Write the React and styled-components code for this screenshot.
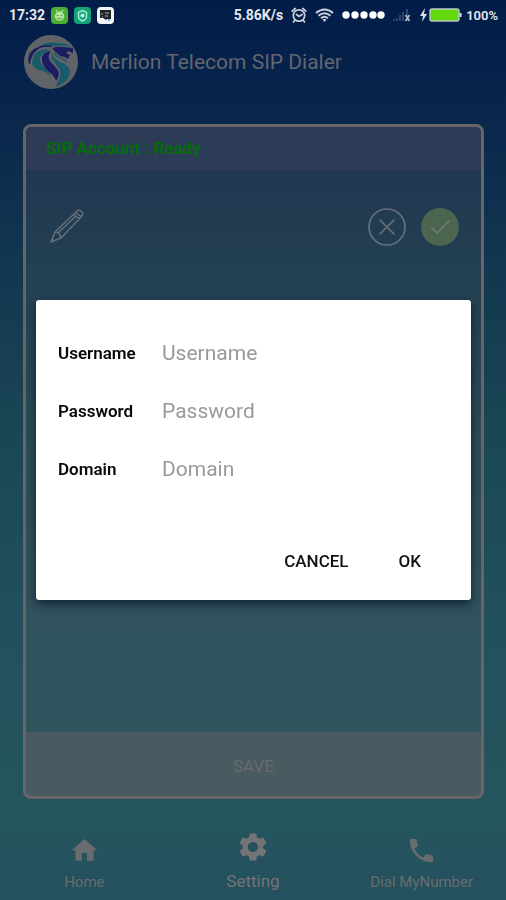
import React from "react";
import styled, { createGlobalStyle } from "styled-components";
import { MdHome, MdSettings, MdPhone } from "react-icons/md";

const GlobalStyle = createGlobalStyle`
  * { box-sizing: border-box; }
  body { margin: 0; background: #24515f; font-family: Roboto, "Liberation Sans", sans-serif; }
  button, input { font: inherit; }
`;

const Screen = styled.div`
  display: flex;
  flex-direction: column;
  min-height: 100vh;
  background: linear-gradient(#011c48 0%, #0a264c 13%, #123850 30%, #1b4855 50%, #23505e 70%, #24555d 90%, #25505f 100%);
`;

const StatusBar = styled.header`
  display: flex;
  align-items: center;
  justify-content: space-between;
  height: 30px;
  padding: 0 8px 0 9px;
  color: #e4e8ef;
  font-size: 14px;
  font-weight: 700;
`;

const StatusGroup = styled.div`
  display: flex;
  align-items: center;
  gap: ${(p) => p.$gap}px;
`;

const Battery = styled.div`
  display: flex;
  align-items: center;
  gap: 4px;
  font-size: 13px;
  font-weight: 600;
`;

const TitleBar = styled.div`
  display: flex;
  align-items: center;
  gap: 13px;
  height: 64px;
  padding: 0 24px;
`;

const Title = styled.h1`
  margin: 0;
  color: #62666f;
  font-size: 21px;
  font-weight: 400;
`;

const Card = styled.main`
  display: flex;
  flex: 1;
  flex-direction: column;
  margin: 30px 22px 0 23px;
  overflow: hidden;
  border: 3px solid #666669;
  border-radius: 8px;
  background: rgba(87, 87, 94, 0.26);
`;

const AccountStatus = styled.div`
  height: 43px;
  padding: 0 20px;
  background: rgba(80, 75, 100, 0.3);
  color: #046c0c;
  font-size: 17px;
  font-weight: 700;
  line-height: 43px;
`;

const Actions = styled.div`
  display: flex;
  flex: 1;
  align-items: flex-start;
  gap: 14px;
  padding: 38px 21px 0 24px;
`;

const IconButton = styled.button`
  display: flex;
  padding: 0;
  border: 0;
  background: none;
  &:first-child { margin-right: auto; }
`;

const SaveButton = styled.button`
  height: 64px;
  padding: 4px 0 0;
  border: 0;
  background: rgba(112, 102, 105, 0.38);
  color: #686a6e;
  font-size: 17px;
`;

const Nav = styled.nav`
  display: grid;
  grid-template-columns: repeat(3, 1fr);
  height: 101px;
  padding-top: 31px;
`;

const NavLink = styled.a`
  display: flex;
  flex-direction: column;
  align-items: center;
  gap: ${(p) => (p.$active ? 7 : 6)}px;
  padding-top: ${(p) => (p.$active ? 0 : 5)}px;
  color: ${(p) => (p.$active ? "#747476" : "#696c6e")};
  font-size: ${(p) => (p.$active ? 17 : 15)}px;
  line-height: 20px;
  text-decoration: none;
`;

const Overlay = styled.div`
  position: fixed;
  inset: 0;
  display: flex;
  align-items: center;
  justify-content: center;
  padding: 0 35px 0 36px;
`;

const Dialog = styled.form`
  width: 100%;
  padding: 24px 22px 19px;
  border-radius: 3px;
  background: #fff;
  box-shadow: 0 4px 10px rgba(0, 15, 30, 0.65);
`;

const Field = styled.label`
  display: grid;
  grid-template-columns: 104px 1fr;
  align-items: center;
  height: 58px;
  color: #080808;
  font-size: 17px;
  font-weight: 600;
`;

const TextBox = styled.input`
  width: 100%;
  padding: 0;
  border: 0;
  outline: 0;
  background: none;
  color: #222;
  font-size: 21px;
  font-weight: 400;
  &::placeholder { color: #999; opacity: 1; }
`;

const DialogActions = styled.div`
  display: flex;
  justify-content: flex-end;
  gap: 18px;
  margin-top: 43px;
  padding-right: 12px;
`;

const DialogButton = styled.button`
  height: 40px;
  padding: 0 16px;
  border: 0;
  background: none;
  color: #111;
  font-size: 17px;
  font-weight: 500;
`;

const AndroidBadge = () => (
  <svg width="17" height="17" viewBox="0 0 17 17" aria-hidden="true">
    <rect width="17" height="17" rx="4" fill="#4caf32" />
    <path d="M5 3l2 3M12 3l-2 3" stroke="#b9e4a5" strokeWidth="1.200" />
    <circle cx="8.500" cy="9.200" r="4.600" fill="#b9e4a5" />
    <path d="M5.500 8.500h2M9.500 8.500h2M6 11q2.500 2 5 0" stroke="#4caf32" fill="none" strokeWidth="1.200" />
  </svg>
);

const ShieldBadge = () => (
  <svg width="17" height="17" viewBox="0 0 17 17" aria-hidden="true">
    <rect width="17" height="17" rx="4" fill="#10a477" />
    <path d="M8.500 3.500l4 2v4q0 3-4 4.500-4-1.500-4-4.500v-4z" fill="none" stroke="#a7e6cf" strokeWidth="1.500" />
    <circle cx="8.500" cy="8.500" r="2" fill="#c9f3e4" />
  </svg>
);

const ChatBadge = () => (
  <svg width="17" height="17" viewBox="0 0 17 17" aria-hidden="true">
    <rect width="17" height="17" rx="4" fill="#f3f5f6" />
    <path d="M3 3h11v9h-4l-1 1-3-2H3z" fill="#1f2427" />
    <path d="M4 7h2M8 6h4M8 9h3M5 10h1" stroke="#aab0b3" />
    <circle cx="12" cy="13" r="1" fill="#3696e8" />
  </svg>
);

const AlarmIcon = () => (
  <svg width="16" height="16" viewBox="0 0 16 16" fill="none" stroke="#c9d0dc" strokeWidth="1.700" strokeLinecap="round" aria-hidden="true">
    <circle cx="8" cy="8.500" r="5.700" />
    <path d="M1.200 4.200l3-2.700M14.800 4.200l-3-2.700M5.500 7.500L8 9.500l3-2M4 13l-1.500 2M12 13l1.500 2" />
  </svg>
);

const WifiIcon = () => (
  <svg width="19" height="14" viewBox="0 0 19 14" fill="none" stroke="#c9d0dc" strokeWidth="2" aria-hidden="true">
    <path d="M1 5q8.500-7 17 0M3.500 7.700q6-5 12 0M6 10.300q3.500-3 7 0" />
    <path d="M7.500 11.500q2-1.500 4 0l-2 2.500z" fill="#c9d0dc" stroke="none" />
  </svg>
);

const SimDots = () => (
  <svg width="43" height="8" viewBox="0 0 43 8" fill="#fff" aria-hidden="true">
    {[4, 13, 22, 31, 39].map((x) => <circle key={x} cx={x} cy="4" r="3.700" />)}
  </svg>
);

const SignalIcon = () => (
  <svg width="18" height="14" viewBox="0 0 18 14" aria-hidden="true">
    <path d="M1 13v-2M4 13v-3M7 13V7M10 13V4M14 13V1" stroke="#304668" strokeWidth="2" />
    <path d="M12.500 7l4 6M16.500 7l-4 6" stroke="#aeb8c8" strokeWidth="1.700" />
  </svg>
);

const ChargeIcon = () => (
  <svg width="43" height="16" viewBox="0 0 43 16" aria-hidden="true">
    <path d="M6 1L1 9h3l-1 6 5-8H5z" fill="#d9dfe7" />
    <rect x="11" y="2" width="29" height="12" rx="2" fill="#62d90b" stroke="#b9c9c9" strokeWidth="1.400" />
    <path d="M41.500 6v4" stroke="#d5dde5" strokeWidth="2" />
  </svg>
);

const Logo = () => (
  <svg width="54" height="54" viewBox="0 0 54 54" role="img" aria-label="Merlion">
    <circle cx="27" cy="27" r="27" fill="#616466" />
    <path d="M17 10Q26 6 34 8q9 0 13 4-7-2-15-1-9 0-17 1z" fill="#175b6a" />
    <path d="M5 29Q2 18 12 13q8-4 17-2l-2 1q-9-1-14 3-6 5-7 14z" fill="#1b1c61" />
    <path d="M28 13q5-2 12-1l9 1v5l-5-2-2 2 4 2-2 4q-4-3-8-3l-2-2q-3-2-6-6z" fill="#1b1c61" />
    <path d="M8 29q0-10 7-13 5-3 12-1-10 2-11 8-1 5 5 10 5 5 5 8-4-5-11-6-5-2-7-6z" fill="#155b6b" />
    <path d="M18 22q1-5 9-6-4 5-1 10l7 8q4 5-1 12-2-6-7-9-8-7-7-15z" fill="#1b1c61" />
    <path d="M28 18q1 6 9 9 9 4 9 10 0 8-12 14l-2-1q6-8 4-15l-6-8q-4-5-2-9z" fill="#155b6b" />
    <path d="M29 17q2 5 10 8 6 3 7 8-4-4-10-6-7-4-7-10z" fill="#616466" />
    <path d="M30 17q3 4 8 6 5 2 6 5-4-3-9-5-5-2-5-6z" fill="#155b6b" />
  </svg>
);

const PencilIcon = () => (
  <svg width="36" height="36" viewBox="0 0 36 36" fill="none" stroke="#65717a" strokeWidth="1.500" strokeLinejoin="round" aria-hidden="true">
    <path d="M1 34l4-10L26 4q2-3 5-1 3 2 1 5L11 30zM5 24q5 0 6 6M24 6q2 4 6 4M26 4q2 4 6 4M8 25L26 8M2 31l2 2" />
  </svg>
);

const CloseIcon = () => (
  <svg width="38" height="38" viewBox="0 0 38 38" fill="none" stroke="#67717a" strokeWidth="1.700" strokeLinecap="round" aria-hidden="true">
    <circle cx="19" cy="19" r="18" />
    <path d="M12 12l14 14M26 12L12 26" />
  </svg>
);

const CheckIcon = () => (
  <svg width="40" height="38" viewBox="0 0 40 38" fill="none" aria-hidden="true">
    <circle cx="20" cy="19" r="19" fill="#4b654e" />
    <path d="M12 20l5 5 12-12" stroke="#687a70" strokeWidth="1.800" strokeLinecap="round" />
  </svg>
);

const fields = [
  { label: "Username", type: "text" },
  { label: "Password", type: "password" },
  { label: "Domain", type: "text" },
];

const links = [
  { label: "Home", Icon: MdHome, size: 31 },
  { label: "Setting", Icon: MdSettings, size: 34, active: true },
  { label: "Dial MyNumber", Icon: MdPhone, size: 31 },
];

export default function App() {
  return (
    <>
      <GlobalStyle />
      <Screen>
        <StatusBar>
          <StatusGroup $gap={6}>
            <span>17:32</span>
            <AndroidBadge />
            <ShieldBadge />
            <ChatBadge />
          </StatusGroup>
          <StatusGroup $gap={8}>
            <span>5.86K/s</span>
            <AlarmIcon />
            <WifiIcon />
            <SimDots />
            <SignalIcon />
            <Battery><ChargeIcon /><span>100%</span></Battery>
          </StatusGroup>
        </StatusBar>
        <TitleBar>
          <Logo />
          <Title>Merlion Telecom SIP Dialer</Title>
        </TitleBar>
        <Card>
          <AccountStatus>SIP Account : Ready</AccountStatus>
          <Actions>
            <IconButton type="button" aria-label="Edit account"><PencilIcon /></IconButton>
            <IconButton type="button" aria-label="Discard"><CloseIcon /></IconButton>
            <IconButton type="button" aria-label="Confirm"><CheckIcon /></IconButton>
          </Actions>
          <SaveButton type="button">SAVE</SaveButton>
        </Card>
        <Nav>
          {links.map(({ label, Icon, size, active }) => (
            <NavLink key={label} href={"#" + label.replace(" ", "")} $active={active}>
              <Icon size={size} aria-hidden="true" />
              {label}
            </NavLink>
          ))}
        </Nav>
      </Screen>
      <Overlay>
        <Dialog role="dialog" aria-label="SIP account" onSubmit={(e) => e.preventDefault()}>
          {fields.map(({ label, type }) => (
            <Field key={label}>
              {label}
              <TextBox type={type} placeholder={label} autoComplete="off" />
            </Field>
          ))}
          <DialogActions>
            <DialogButton type="button">CANCEL</DialogButton>
            <DialogButton type="submit">OK</DialogButton>
          </DialogActions>
        </Dialog>
      </Overlay>
    </>
  );
}
